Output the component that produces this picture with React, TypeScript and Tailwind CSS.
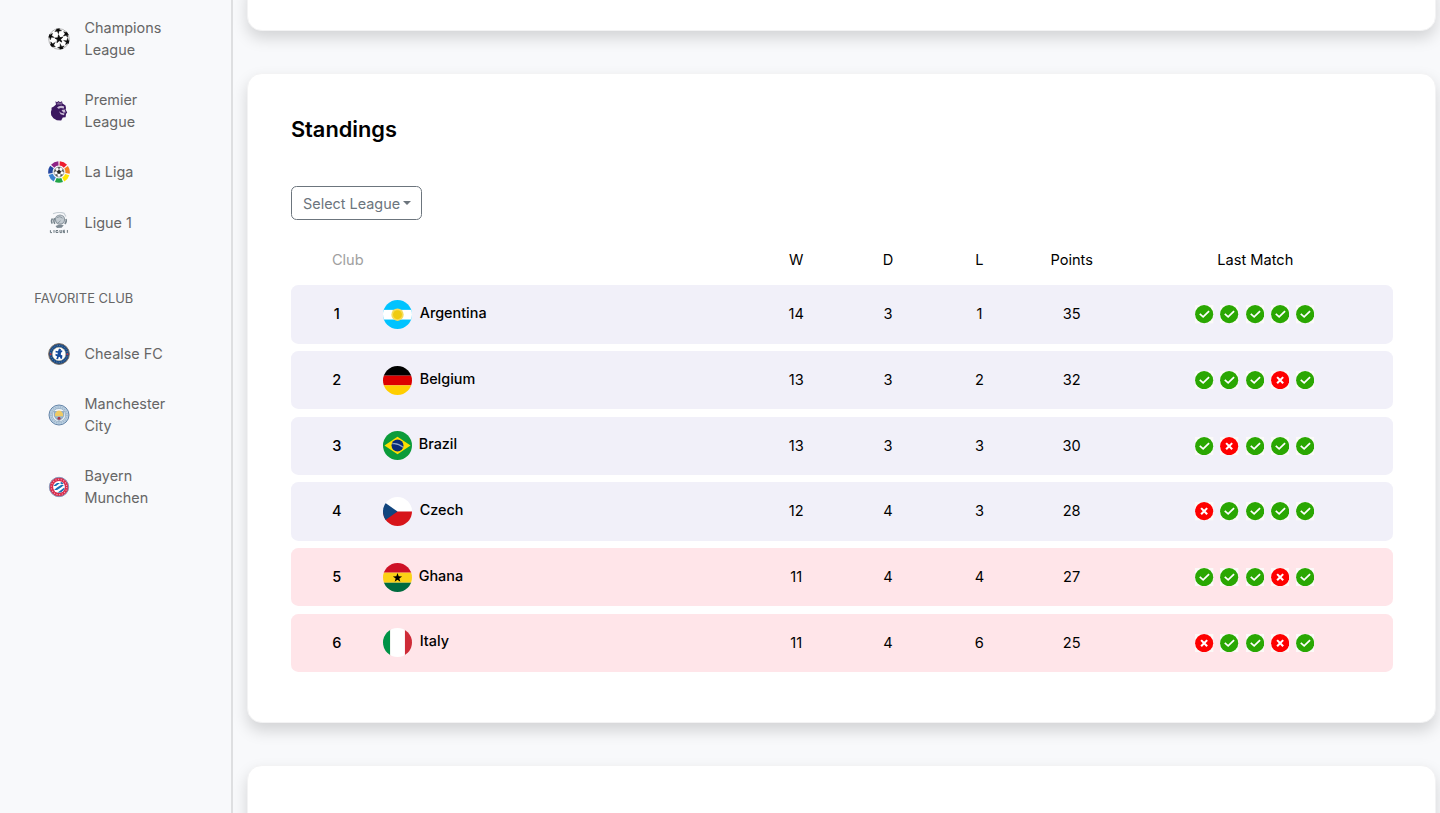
import React from "react";

type Result = "w" | "l";
type Row = {
  club: string;
  flag: React.ReactNode;
  w: number;
  d: number;
  l: number;
  points: number;
  last: Result[];
};

function Flag({ id, children }: { id: string; children: React.ReactNode }) {
  return (
    <svg className="size-[29px] shrink-0" viewBox="0 0 30 30">
      <clipPath id={id}>
        <circle cx="15" cy="15" r="15" />
      </clipPath>
      <g clipPath={`url(#${id})`}>{children}</g>
    </svg>
  );
}

const star = "M0-10 2.4-3.2 9.5-3.1 3.8 1.2 5.9 8.1 0 4-5.9 8.1-3.8 1.2-9.5-3.1-2.4-3.2Z";

const rows: Row[] = [
  {
    club: "Argentina", w: 14, d: 3, l: 1, points: 35, last: ["w", "w", "w", "w", "w"],
    flag: (
      <Flag id="ar">
        <rect width="30" height="30" fill="#00c3ff" />
        <rect y="10.2" width="30" height="10" fill="#fff" />
        <circle cx="15" cy="15.2" r="6.4" fill="#f5dc5a" />
        <circle cx="15" cy="15.2" r="4.6" fill="#efcb12" />
      </Flag>
    ),
  },
  {
    club: "Belgium", w: 13, d: 3, l: 2, points: 32, last: ["w", "w", "w", "l", "w"],
    flag: (
      <Flag id="be">
        <rect width="30" height="10" fill="#000" />
        <rect y="10" width="30" height="10" fill="#d00" />
        <rect y="20" width="30" height="10" fill="#ffce00" />
      </Flag>
    ),
  },
  {
    club: "Brazil", w: 13, d: 3, l: 3, points: 30, last: ["w", "l", "w", "w", "w"],
    flag: (
      <Flag id="br">
        <rect width="30" height="30" fill="#0b9b3a" />
        <path d="M1.5 15 15 6 28.5 15 15 24Z" fill="#fedf00" />
        <circle cx="15" cy="15" r="6.2" fill="#0a2c78" />
        <path d="M9.5 13.2Q15.5 12.2 20.8 16.8" stroke="#8fa6c6" strokeWidth="1.2" fill="none" />
      </Flag>
    ),
  },
  {
    club: "Czech", w: 12, d: 4, l: 3, points: 28, last: ["l", "w", "w", "w", "w"],
    flag: (
      <Flag id="cz">
        <rect width="30" height="15" fill="#fff" />
        <rect y="15" width="30" height="15" fill="#d7141a" />
        <path d="M0 4.5 15 15 0 25.5Z" fill="#11457e" />
      </Flag>
    ),
  },
  {
    club: "Ghana", w: 11, d: 4, l: 4, points: 27, last: ["w", "w", "w", "l", "w"],
    flag: (
      <Flag id="gh">
        <rect width="30" height="10" fill="#ce1126" />
        <rect y="10" width="30" height="10.4" fill="#fcd116" />
        <rect y="20.4" width="30" height="10" fill="#006b3f" />
        <path d={star} transform="translate(15 15.4) scale(.5)" fill="#000" />
      </Flag>
    ),
  },
  {
    club: "Italy", w: 11, d: 4, l: 6, points: 25, last: ["l", "w", "w", "l", "w"],
    flag: (
      <Flag id="it">
        <rect width="7.5" height="30" fill="#009246" />
        <rect x="7.5" width="15.2" height="30" fill="#fff" />
        <rect x="22.7" width="7.5" height="30" fill="#ce2b37" />
      </Flag>
    ),
  },
];

function ResultIcon({ result }: { result: Result }) {
  return (
    <svg className="size-[18.3px] shrink-0" viewBox="0 0 20 20">
      <rect width="20" height="20" fill="#fbfaf8" />
      <circle cx="10" cy="10" r="9.9" fill={result === "w" ? "#2aa702" : "#fe0000"} />
      <path
        d={result === "w" ? "M5.2 9.7 8.9 12.9 15.4 6.6" : "M6.7 6.7 13.3 13.3M13.3 6.7 6.7 13.3"}
        stroke="#fff"
        strokeWidth={result === "w" ? 1.9 : 2.3}
        fill="none"
      />
    </svg>
  );
}

function ChampionsLogo() {
  return (
    <svg className="size-[22px] shrink-0" viewBox="-11 -11 22 22">
      <clipPath id="ball"><circle r="10.6" /></clipPath>
      <circle r="10.3" fill="#fff" stroke="#999" strokeWidth=".7" />
      <g clipPath="url(#ball)">
        <path d={star} transform="rotate(-6) scale(.42)" fill="#0a0a0a" stroke="#0a0a0a" strokeWidth="1.6" />
        {[-6, 56, 108, 166, 228, 288].map((a) => (
          <g key={a} transform={`rotate(${a})`}>
            <path d="M0-4V-7" stroke="#888" strokeWidth=".6" />
            <path d={star} transform="translate(0 -9.1) rotate(180) scale(.36)" fill="#0a0a0a" stroke="#0a0a0a" strokeWidth="1.2" />
          </g>
        ))}
      </g>
    </svg>
  );
}

function PremierLogo() {
  return (
    <svg className="size-[22px] shrink-0" viewBox="0 0 22 22">
      <path d="M7.4 1.2 9 2.2 10.5 1 12 2.2 14 1.2 14.5 3.4 17.5 5.5 18 8 17.6 9.6 19.2 12.6 18 14 17.6 17.2 14.8 17.6 13.2 20.6 8.8 20.2 5.4 18.2 3.2 15.2 2.9 12 3.6 9.4 3.5 7.8 5.8 6.4 8 4.6Z" fill="#3b1760" />
      <path d="M8 2 9 3.4 10.5 2 12 3.2 13.6 2 14 4.4 9 4.6Z" fill="#7f6596" />
      <path d="M9 7.4Q12 4.8 16.2 6.4L15.8 8.4 12.8 7.9 10.5 8.8ZM13.5 10 16.8 9.6 17.6 12.6 15.2 12.6ZM11 11.2 13 12.8 16.5 13.6 16 15.2 12.6 14.2Z" fill="#c9bbd5" />
    </svg>
  );
}

const ligaColors = ["#ee1c2e", "#f58220", "#ffe600", "#22a447", "#3b82cf", "#2346a0", "#8f2385"];

function LaLigaLogo() {
  return (
    <svg className="size-[22px] shrink-0" viewBox="-11 -11 22 22">
      {ligaColors.map((c, i) => (
        <path
          key={c}
          d="M-3.2-8A8.6 8.6 0 0 1 3.2-8"
          fill="none"
          stroke={c}
          strokeWidth="4.4"
          transform={`rotate(${26 + i * 51.43})`}
        />
      ))}
      <circle r="5" fill="#fff" stroke="#999" strokeWidth=".8" />
      <path d="M0-2.2 2.1-.7 1.3 1.8H-1.3L-2.1-.7Z" fill="#222" />
      {[0, 72, 144, 216, 288].map((a) => (
        <path key={a} d="M0-2V-3.4M-1.2-4.4H1.2L0-3.4Z" transform={`rotate(${a})`} stroke="#444" strokeWidth=".6" fill="#444" />
      ))}
    </svg>
  );
}

function LigueLogo() {
  return (
    <svg className="size-[22px] shrink-0" viewBox="0 0 22 22">
      <path d="M5 1.8Q11-.6 16 1.2L18 4.5" stroke="#c5cdd3" strokeWidth="1.2" fill="none" />
      <circle cx="12" cy="7.6" r="4.6" fill="#c3cbd1" stroke="#8b979f" strokeWidth="1.2" />
      <path d="M9 5.5Q12 3.5 14.5 6.2M10 11 12.5 8.8" stroke="#8b979f" strokeWidth="1" fill="none" />
      <path d="M4.5 6.5Q2.6 8.8 4.2 11.6M6.6 6.2Q5 9 6.8 11.8M18 7Q19 9.8 16.8 12" stroke="#77848c" strokeWidth="1.5" fill="none" />
      <path d="M7.5 14Q12 11.8 15.8 13.3L13.6 15.8 9 15.9Z" fill="#7e8a93" />
      <path d="M2.4 18.2V20.6H4M6 18V20.8M10 18.5H8V20.5H10V19.6M12 18V20.6H13.8V18M16.9 18.3H15.5V20.6H17M15.5 19.5H16.8M19.4 18V20.8" stroke="#6d7a82" strokeWidth="1" fill="none" />
    </svg>
  );
}

function ChelseaLogo() {
  return (
    <svg className="size-[22px] shrink-0" viewBox="-11 -11 22 22">
      <circle r="10.4" fill="#174a86" stroke="#806d59" strokeWidth=".9" />
      <circle r="8.5" fill="none" stroke="#7388a3" strokeWidth="1" strokeDasharray="1 1.5" />
      <circle r="6.7" fill="#fff" stroke="#c4b68c" strokeWidth=".5" />
      <path d="M0-5.4 2-4.8 1.8-3 3-4 3.4-2.6 2-1.2 1.8 .8 3.4 1.6 3 4.8 1.6 4.8.8 2.8-.6 3.4-.8 5.2-2.8 5-1.8 2.4-3.6 1.4-3.4-.2-1.6 .6-1.2-1.2-3.4-1.6-3.4-3.2-1-2.8Z" fill="#164b9c" />
      <circle cx="-8.4" cy=".3" r="1" fill="#bf373e" />
      <circle cx="8.4" cy=".3" r="1" fill="#bf373e" />
    </svg>
  );
}

function CityLogo() {
  return (
    <svg className="size-[22px] shrink-0" viewBox="-11 -11 22 22">
      <circle r="10" fill="#b9cfe1" stroke="#6686a9" strokeWidth="1" />
      <circle r="8" fill="none" stroke="#9eb5c9" strokeWidth="1.4" strokeDasharray="1.1 1.3" />
      <circle r="6.6" fill="#edf3f7" stroke="#839eb7" strokeWidth=".6" />
      <path d="M-4.8-3.4H4.8V.6Q4 4 0 5.6-4 4-4.8.6Z" fill="#91b6d4" stroke="#6b8299" strokeWidth=".5" />
      <path d="M-4-1.5-2-4 0-4.4 2-4 4-1.5V1.2H-4Z" fill="#efca64" />
      <circle cy="3.2" r="1.5" fill="#a63b4b" />
    </svg>
  );
}

function BayernLogo() {
  return (
    <svg className="size-[22px] shrink-0" viewBox="-11 -11 22 22">
      <clipPath id="bayern"><circle r="5.7" /></clipPath>
      <circle r="9.7" fill="#d92b4b" stroke="#8796b8" strokeWidth="1" />
      <circle r="7.7" fill="none" stroke="#efa3b1" strokeWidth="1.2" strokeDasharray="1.1 1.6" />
      <circle r="5.9" fill="#fff" />
      <path clipPath="url(#bayern)" d="M-6-1-2-4 1-4-3-1ZM1-4 4-6 7-5 3-2.4ZM-5 3-2 .6 2 .6-2 3ZM-2 .6 2-2 5-2 2 .6ZM2 3 5 .8 7 1 4 4ZM-2 6 2 3 4 4 1 7Z" fill="#1771b5" />
    </svg>
  );
}

function NavItem({ icon, label }: { icon: React.ReactNode; label: string }) {
  return (
    <li className="flex items-center gap-[14.4px] py-[14.1px]">
      {icon}
      <span className="w-[92px] leading-[22px]">{label}</span>
    </li>
  );
}

const card = "rounded-[14.6px] bg-white shadow-[0_7.3px_14.6px_rgba(0,0,0,0.15)] border border-[#f3f3f4]";

export default function App() {
  return (
    <div className="flex h-[813px] w-full overflow-hidden bg-[#f8f9fb] font-[Inter,sans-serif] text-[14.6px] leading-[22px] text-black">
      <aside className="w-[233px] shrink-0 border-r-2 border-[#dedfe1] pt-[2.9px] text-[14.4px] text-[#666]">
        <ul className="pl-[48.2px]">
          <NavItem icon={<ChampionsLogo />} label="Champions League" />
          <NavItem icon={<PremierLogo />} label="Premier League" />
          <NavItem icon={<LaLigaLogo />} label="La Liga" />
          <NavItem icon={<LigueLogo />} label="Ligue 1" />
        </ul>
        <h2 className="mt-[40.4px] mb-[18.6px] pl-[34.3px] text-[12.9px]">FAVORITE CLUB</h2>
        <ul className="pl-[48.2px]">
          <NavItem icon={<ChelseaLogo />} label="Chealse FC" />
          <NavItem icon={<CityLogo />} label="Manchester City" />
          <NavItem icon={<BayernLogo />} label="Bayern Munchen" />
        </ul>
      </aside>
      <main className="flex min-w-0 flex-1 flex-col gap-[42.5px] pr-[4px] pl-[14.4px]">
        <section className={`${card} -mt-5 h-[50.7px] shrink-0`} />
        <section className={`${card} h-[649.5px] shrink-0 px-[42.5px] pt-[42px]`}>
          <h1 className="text-[21.8px] leading-[26px] font-semibold">Standings</h1>
          <button className="mt-[43.7px] flex h-[34.6px] w-[131px] items-center rounded-[5.5px] border border-[#6c757d] pt-[1.4px] pl-[11.2px] text-[14.4px] text-[#6c757d]">
            Select League
            <span className="mb-[1px] ml-[3.2px] border-x-[4px] border-t-[4px] border-x-transparent border-t-[#6c757d]" />
          </button>
          <div className="mt-[28.8px] grid grid-cols-12 text-center">
            <span className="col-span-5 pl-[41px] text-left text-[#a0a0a0]">Club</span>
            <span className="pl-px">W</span>
            <span className="pl-px">D</span>
            <span>L</span>
            <span className="pl-px">Points</span>
            <span className="col-span-3 pl-px">Last Match</span>
          </div>
          <div className="mt-[13.9px] flex flex-col gap-[7.3px]">
            {rows.map((r, i) => (
              <div
                key={r.club}
                className={`grid h-[58.4px] grid-cols-12 items-center rounded-[7.3px] text-center ${i < 4 ? "bg-[#f1f0f9]" : "bg-[#ffe5e9]"}`}
              >
                <span className="font-medium">{i + 1}</span>
                <span className={`col-span-4 flex items-center text-left text-[14.4px] font-medium ${i === 2 || i === 4 ? "gap-[7px]" : "gap-[8px]"}`}>
                  {r.flag}
                  <span className="pb-[3px]">{r.club}</span>
                </span>
                <span className="pl-px">{r.w}</span>
                <span className="pl-px">{r.d}</span>
                <span>{r.l}</span>
                <span className="pl-px">{r.points}</span>
                <span className="col-span-3 flex justify-center gap-[6.9px]">
                  {r.last.map((x, j) => (
                    <ResultIcon key={j} result={x} />
                  ))}
                </span>
              </div>
            ))}
          </div>
        </section>
        <section className={`${card} h-[120px] shrink-0`} />
      </main>
    </div>
  );
}
